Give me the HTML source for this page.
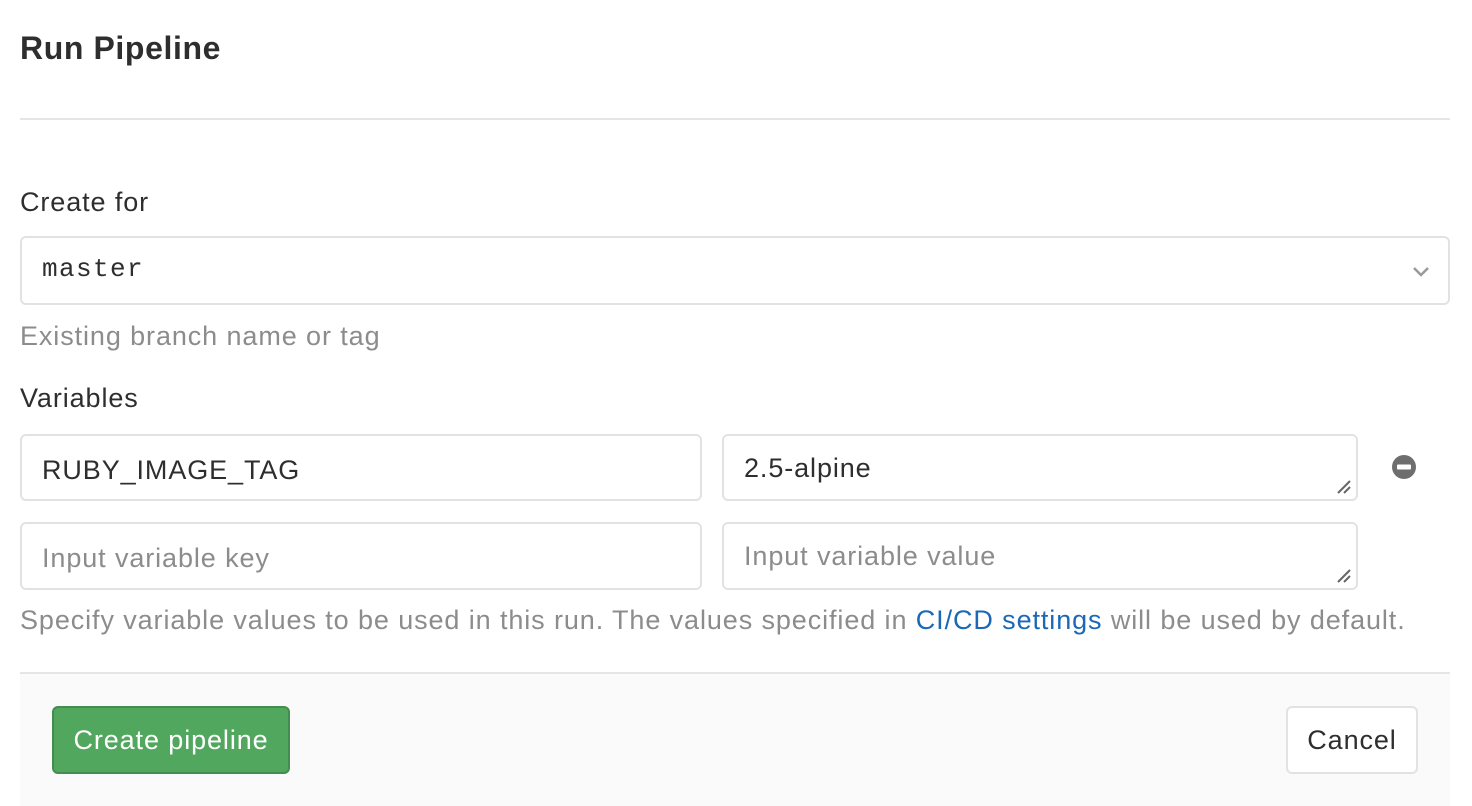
<!DOCTYPE html>
<html><head><style>
*{box-sizing:border-box;margin:0;padding:0}
body{width:1472px;height:806px;background:#fff;font-family:"Liberation Sans",sans-serif;color:#2e2e2e;position:relative;overflow:hidden}
.a{position:absolute;white-space:nowrap}
.t,.btn{font-size:27px;letter-spacing:0.9px}
.t{line-height:30px}
.box{position:absolute;border:2px solid #e2e2e2;border-radius:6px;background:#fff}
.g{color:#8c8c8c}
.rs{position:absolute;right:4px;bottom:4px}
</style></head><body>
<div class="a" style="left:20px;top:29px;font-size:32px;font-weight:bold;line-height:38px;color:#2e2e2e;letter-spacing:0.6px">Run Pipeline</div>
<div class="a" style="left:20px;top:118px;width:1430px;height:2px;background:#e5e5e5"></div>
<div class="a t" style="left:20px;top:187px">Create for</div>
<div class="box" style="left:20px;top:236px;width:1430px;height:69px"></div>
<div class="a" style="left:42px;top:254px;font-family:'Liberation Mono',monospace;font-size:26px;line-height:30px;letter-spacing:1.4px">master</div>
<svg class="a" style="left:1411px;top:265px" width="20" height="14" viewBox="0 0 20 14"><path d="M3 3l7 7 7-7" fill="none" stroke="#9a9a9a" stroke-width="2.5"/></svg>
<div class="a t g" style="left:20px;top:321px">Existing branch name or tag</div>
<div class="a t" style="left:20px;top:383px">Variables</div>
<div class="box" style="left:20px;top:434px;width:682px;height:67px"></div>
<div class="a t" style="left:42px;top:455px">RUBY_IMAGE_TAG</div>
<div class="box" style="left:722px;top:434px;width:636px;height:67px"><svg class="rs" width="16" height="16"><path d="M2 14L14 2M8 14L14 8" stroke="#666" stroke-width="2"/></svg></div>
<div class="a t" style="left:744px;top:453px">2.5-alpine</div>
<svg class="a" style="left:1392px;top:455px" width="24" height="24"><circle cx="12" cy="12" r="12" fill="#6e6e6e"/><rect x="5" y="9.5" width="14" height="5" rx="1" fill="#fff"/></svg>
<div class="box" style="left:20px;top:522px;width:682px;height:68px"></div>
<div class="a t g" style="left:42px;top:543px">Input variable key</div>
<div class="box" style="left:722px;top:522px;width:636px;height:68px"><svg class="rs" width="16" height="16"><path d="M2 14L14 2M8 14L14 8" stroke="#666" stroke-width="2"/></svg></div>
<div class="a t g" style="left:744px;top:541px">Input variable value</div>
<div class="a t g" style="left:20px;top:605px">Specify variable values to be used in this run. The values specified in <span style="color:#1b69b6">CI/CD settings</span> will be used by default.</div>
<div class="a" style="left:20px;top:672px;width:1430px;height:134px;background:#fafafa;border-top:2px solid #e5e5e5"></div>
<div class="a btn" style="left:52px;top:706px;width:238px;height:68px;background:#52a75f;border:2px solid #448d50;border-radius:6px;color:#fff;line-height:64px;text-align:center">Create pipeline</div>
<div class="a btn" style="left:1286px;top:706px;width:132px;height:68px;background:#fff;border:2px solid #e2e2e2;border-radius:6px;line-height:64px;text-align:center">Cancel</div>
</body></html>
